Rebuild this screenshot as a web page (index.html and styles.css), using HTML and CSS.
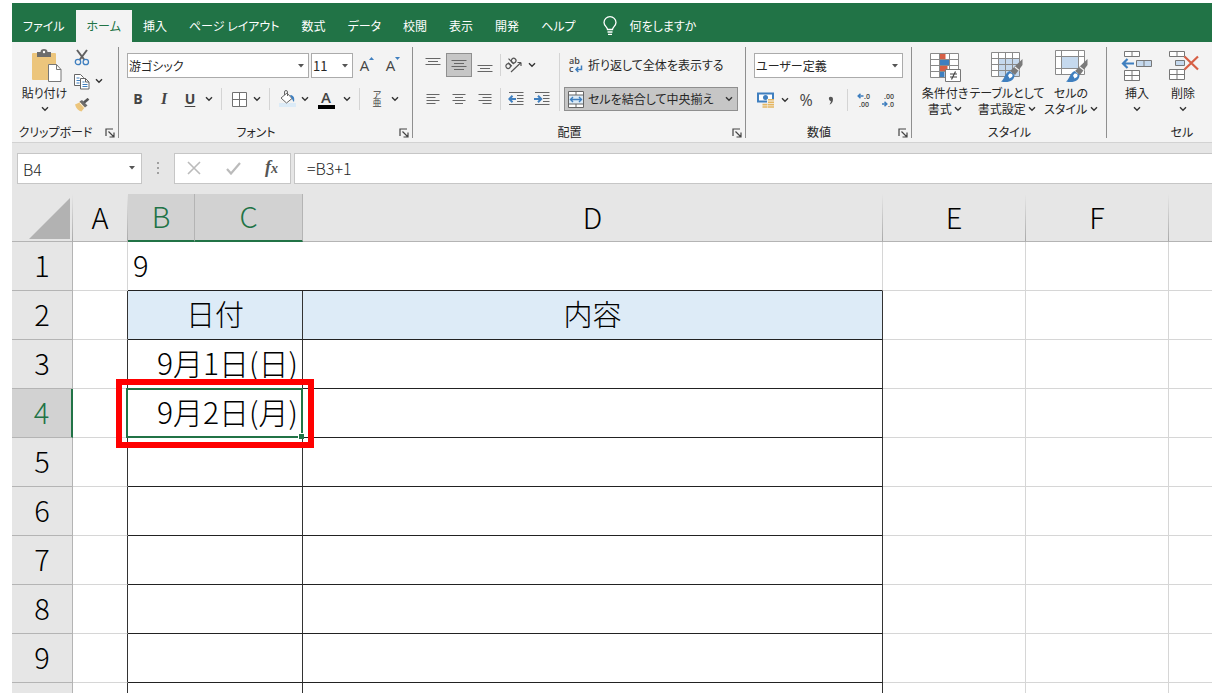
FILE: index.html
```html
<!DOCTYPE html>
<html lang="ja">
<head>
<meta charset="utf-8">
<title>B4 - Excel</title>
<link rel="stylesheet" href="styles.css">
</head>
<body>
<svg class="defs" aria-hidden="true">
  <symbol id="chev" viewBox="0 0 8 6"><path d="M1 1.2l3 3 3-3" fill="none" stroke="#333" stroke-width="1.4"/></symbol>
  <symbol id="tri" viewBox="0 0 6 4"><path d="M0 0h6L3 3.4z" fill="#555"/></symbol>
  <symbol id="launch" viewBox="0 0 10 10"><path d="M1 8V1h7M3.5 3.5l5 5M9 4.500V9H4.500" fill="none" stroke="#444" stroke-width="1.200"/></symbol>
  <symbol id="brush" viewBox="0 0 22 24"><path d="M21.500 0v6l-7.500 10-5-4z" fill="#7a7a7a"/><path d="M13.800 8l4.500 3.500" stroke="#f3f3f3" stroke-width="1.200"/><path d="M8.500 12l5 4c0 5.500-6 8.500-13.500 6.500C4 20 3.500 14 8.500 12z" fill="#3f7fbf"/><path d="M8 15c2-1 4 0 3.500 2-.5 1.600-2 1.500-3 2.500-.5-1-.2-1.500-1.500-2.500z" fill="#fff"/></symbol>
</svg>
<div class="app">
  <nav class="tabs">
    <button class="tab">ファイル</button>
    <button class="tab active">ホーム</button>
    <button class="tab">挿入</button>
    <button class="tab">ページ レイアウト</button>
    <button class="tab">数式</button>
    <button class="tab">データ</button>
    <button class="tab">校閲</button>
    <button class="tab">表示</button>
    <button class="tab">開発</button>
    <button class="tab">ヘルプ</button>
    <button class="tab tell"><svg width="14" height="20" viewBox="0 0 14 20" fill="none" stroke="#fff" stroke-width="1.300"><path d="M4.500 13.500c0-2.500-3.500-3.500-3.500-7a6 5.800 0 0 1 12 0c0 3.500-3.500 4.500-3.500 7zM4.500 16h5M5 18.400h4"/></svg>何をしますか</button>
  </nav>

  <div class="ribbon">
    <section class="group g-clip">
      <div class="body">
        <button class="big paste">
          <svg width="34" height="34" viewBox="0 0 34 34"><rect x="4" y="4" width="24" height="27" rx="1" fill="#ecc57c"/><path d="M9 3h3.500a3.500 3 0 0 1 7 0H23v5H9z" fill="#6d6d6d"/><circle cx="16" cy="3" r="1.200" fill="#fff"/><path d="M20.500 15.500h8l4.500 5v12h-12.500z" fill="#fff" stroke="#777"/><path d="M28.500 15.500v5H33" fill="none" stroke="#777"/></svg>
          <span>貼り付け</span><svg class="chev"><use href="#chev"/></svg>
        </button>
        <div class="stack">
          <button class="ic" aria-label="切り取り"><svg width="16" height="17" viewBox="0 0 16 17" fill="none"><path d="M3 1l7.500 10M13 1L5.500 11" stroke="#606060" stroke-width="2"/><circle cx="4" cy="13" r="2.700" stroke="#3f7fbf" stroke-width="1.300"/><circle cx="11.800" cy="13" r="2.700" stroke="#3f7fbf" stroke-width="1.300"/></svg></button>
          <div class="row"><button class="ic" aria-label="コピー"><svg width="16" height="17" viewBox="0 0 16 17" fill="#fff" stroke="#666"><path d="M.5 1.500h6l3 3v8h-9z"/><path d="M2.500 5h3M2.500 7.500h4M2.500 10h3" stroke="#3f7fbf"/><path d="M6.500 5.500h5l3.500 3.500v7h-8.500z"/><path d="M11.500 5.500V9H15" fill="none"/><path d="M8.500 9h2M8.500 11.500h5M8.500 13.500h5" stroke="#3f7fbf"/></svg></button><button class="dd" aria-label="コピーのオプション"><svg class="chev"><use href="#chev"/></svg></button></div>
          <button class="ic" aria-label="書式のコピー"><svg width="16" height="14" viewBox="0 0 16 14"><path d="M1 6.500L6.500 4l4.500 5-3.500 4.500C4.500 13 2 10.500 1 6.500z" fill="#ecc57c"/><path d="M5.500 3.500L8 2l5.500 5.500-2.500 2z" fill="#6d6d6d"/><path d="M10 4.500L14.500.800" stroke="#555" stroke-width="2.600"/><path d="M6 5l4.500 5" stroke="#fff" stroke-width=".8"/></svg></button>
        </div>
      </div>
      <footer><span>クリップボード</span><button class="launch" aria-label="クリップボードの設定"><svg width="10" height="10"><use href="#launch"/></svg></button></footer>
    </section>

    <section class="group g-font">
      <div class="body col">
        <div class="row inset">
          <span class="combo name"><select aria-label="フォント"><option>游ゴシック</option></select><svg class="tri"><use href="#tri"/></svg></span>
          <span class="combo size"><select aria-label="フォント サイズ"><option>11</option></select><svg class="tri"><use href="#tri"/></svg></span>
          <button class="ic" aria-label="拡大"><span class="letter">A</span><svg class="mark" viewBox="0 0 5 3"><path d="M0 3L2.500 0 5 3z" fill="#3f7fbf"/></svg></button>
          <button class="ic" aria-label="縮小"><span class="letter">A</span><svg class="mark" viewBox="0 0 5 3"><path d="M0 0L2.500 3 5 0z" fill="#3f7fbf"/></svg></button>
        </div>
        <div class="row">
          <button class="ic b">B</button><button class="ic wide i">I</button><button class="ic u">U</button><button class="dd" aria-label="下線"><svg class="chev"><use href="#chev"/></svg></button>
          <i class="sep"></i>
          <button class="ic nar" aria-label="罫線"><svg width="15" height="15" viewBox="0 0 15 15"><path d="M.5.5h14v14H.5zM7.500.5v14M.5 7.500h14" fill="#fff" stroke="#707070"/></svg></button><button class="dd" aria-label="罫線の種類"><svg class="chev"><use href="#chev"/></svg></button>
          <i class="sep"></i>
          <button class="ic nar" aria-label="塗りつぶし"><svg width="17" height="18" viewBox="0 0 17 18"><rect y="13" width="17" height="4" fill="#dcebf7"/><path d="M2 8l6-5 5 5.500-5.500 4.500z" fill="#fff" stroke="#666"/><path d="M5.500 5V2a1.500 1.500 0 0 1 3 0v4" fill="none" stroke="#666"/><path d="M11 5c3 0 5 2 4 7-1.500-1-1.500-3-2.500-4z" fill="#3f7fbf"/></svg></button><button class="dd" aria-label="塗りつぶしの色"><svg class="chev"><use href="#chev"/></svg></button>
          <button class="ic wide color"><span>A</span></button><button class="dd" aria-label="フォントの色"><svg class="chev"><use href="#chev"/></svg></button>
          <i class="sep"></i>
          <button class="ic nar ruby"><span>ア</span><span>亜</span></button><button class="dd" aria-label="ふりがな"><svg class="chev"><use href="#chev"/></svg></button>
        </div>
      </div>
      <footer><span>フォント</span><button class="launch" aria-label="フォントの設定"><svg width="10" height="10"><use href="#launch"/></svg></button></footer>
    </section>

    <section class="group g-align">
      <div class="body">
        <div class="col left">
          <div class="row">
            <button class="ic mid" aria-label="上揃え"><svg width="16" height="16" viewBox="0 0 16 16" stroke="#666"><path d="M.5 1.500h15M3 4.500h10M.5 7.500h15"/></svg></button>
            <button class="ic mid on" aria-label="上下中央揃え"><svg width="16" height="16" viewBox="0 0 16 16" stroke="#666"><path d="M.5 3.500h15M3 6.500h10M.5 9.500h15M3 12.500h10"/></svg></button>
            <button class="ic mid" aria-label="下揃え"><svg width="16" height="16" viewBox="0 0 16 16" stroke="#666"><path d="M.5 8.500h15M3 11.500h10M.5 14.500h15"/></svg></button>
            <i class="sep thin"></i>
            <button class="ic nar" aria-label="方向"><svg width="18" height="18" viewBox="0 0 18 18" fill="none" stroke="#555" stroke-width="1.200"><path d="M6 16L16 6.500M16 6.500h-3.500M16 6.500V10"/><g transform="rotate(-45 6 8)"><circle cx="2.500" cy="7.500" r="2.300"/><path d="M5 5v5.200M8 2.500v7.500"/><circle cx="10.300" cy="7.500" r="2.300"/></g></svg></button><button class="dd" aria-label="方向の種類"><svg class="chev"><use href="#chev"/></svg></button>
          </div>
          <div class="row">
            <button class="ic mid" aria-label="左揃え"><svg width="14" height="12" viewBox="0 0 14 12" stroke="#666"><path d="M.5 1.500h13M.5 4.500h9M.5 7.500h13M.5 10.500h9"/></svg></button>
            <button class="ic mid" aria-label="中央揃え"><svg width="14" height="12" viewBox="0 0 14 12" stroke="#666"><path d="M.5 1.500h13M3 4.500h8M.5 7.500h13M3 10.500h8"/></svg></button>
            <button class="ic mid" aria-label="右揃え"><svg width="14" height="12" viewBox="0 0 14 12" stroke="#666"><path d="M.5 1.500h13M4.500 4.500h9M.5 7.500h13M4.500 10.500h9"/></svg></button>
            <i class="sep thin"></i>
            <button class="ic mid" aria-label="インデントを減らす"><svg width="16" height="14" viewBox="0 0 16 14"><path d="M1 .5h14.500M9 3.500h6.500M9 6.500h6.500M9 9.500h6.500M1 12.500h14.500" stroke="#666"/><path d="M8 7H2M4.500 3.800L1.300 7l3.200 3.200" fill="none" stroke="#3f7fbf" stroke-width="2"/></svg></button>
            <button class="ic mid" aria-label="インデントを増やす"><svg width="16" height="14" viewBox="0 0 16 14"><path d="M1 .5h14.500M9 3.500h6.500M9 6.500h6.500M9 9.500h6.500M1 12.500h14.500" stroke="#666"/><path d="M0 7h6M4 3.800L7.200 7 4 10.200" fill="none" stroke="#3f7fbf" stroke-width="2"/></svg></button>
          </div>
        </div>
        <div class="col right">
          <button class="text"><svg width="16" height="20" viewBox="0 0 16 20"><text x="1" y="9" class="glyph">ab</text><text x="1" y="17" class="glyph">c</text><path d="M13.500 10.500v4H8M10.300 12L8 14.500l2.300 2.500" fill="none" stroke="#3f7fbf" stroke-width="1.500"/></svg>折り返して全体を表示する</button>
          <button class="text on"><svg width="16" height="17" viewBox="0 0 16 17"><path d="M.5.5h15v16H.5zM8 .5v3.500M8 13v3.500" fill="#fff" stroke="#666"/><path d="M.5 4h15v9H.5z" fill="#dcebf7" stroke="#666"/><path d="M3 8.500h10M5 6L2.500 8.500 5 11M11 6l2.500 2.500L11 11" fill="none" stroke="#3f7fbf" stroke-width="1.400"/></svg>セルを結合して中央揃え<svg class="chev end"><use href="#chev"/></svg></button>
        </div>
      </div>
      <footer><span>配置</span><button class="launch" aria-label="配置の設定"><svg width="10" height="10"><use href="#launch"/></svg></button></footer>
    </section>

    <section class="group g-num">
      <div class="body col">
        <span class="combo"><select aria-label="表示形式"><option>ユーザー定義</option></select><svg class="tri"><use href="#tri"/></svg></span>
        <div class="row">
          <button class="ic" aria-label="通貨表示形式"><svg width="18" height="17" viewBox="0 0 18 17"><path d="M1 1.500h15v8H1z" fill="#fff" stroke="#3f7fbf" stroke-width="2"/><circle cx="8.500" cy="5.500" r="2.500" fill="#3f7fbf"/><path d="M10 7h7v9h-7zM5 11h6v5H5z" fill="#f3f3f3"/><path d="M11 7.800h6M11 10.200h6M11 12.600h6M11 15h6M5.500 12.600h5M5.500 15h5" stroke="#e5b661" stroke-width="1.600"/></svg></button><button class="dd" aria-label="通貨の種類"><svg class="chev"><use href="#chev"/></svg></button>
          <button class="ic wide pct">%</button>
          <button class="ic nar" aria-label="桁区切り"><svg width="6" height="9" viewBox="0 0 6 9"><path d="M1 1.500C2 .2 5 .3 5 3.200 5 6 3.500 8 1.500 8.500 2.500 7 3 6 2.800 5 1.500 5 .5 3 1 1.500z" fill="#555"/></svg></button>
          <i class="sep"></i>
          <button class="ic nar" aria-label="小数点以下の表示桁数を増やす"><svg width="16" height="20" viewBox="0 0 16 20"><text x="7" y="9" class="dec">.0</text><text x="2" y="17" class="dec">.00</text><path d="M6.500 6H2M3.500 3.800L1.200 6l2.300 2.200" fill="none" stroke="#3f7fbf" stroke-width="1.500"/></svg></button>
          <button class="ic mid" aria-label="小数点以下の表示桁数を減らす"><svg width="16" height="20" viewBox="0 0 16 20"><text x="3" y="9" class="dec">.00</text><text x="7" y="17" class="dec">.0</text><path d="M1 14h4.500M3.500 11.800L5.800 14l-2.300 2.200" fill="none" stroke="#3f7fbf" stroke-width="1.500"/></svg></button>
        </div>
      </div>
      <footer><span>数値</span><button class="launch" aria-label="数値の設定"><svg width="10" height="10"><use href="#launch"/></svg></button></footer>
    </section>

    <section class="group g-style">
      <div class="body">
        <button class="big">
          <svg width="34" height="34" viewBox="0 0 34 34"><path d="M2.500 4.500h28v24h-28z" fill="#fff"/><path d="M11.500 4h6v6h-6zM11.500 16h8v6h-8z" fill="#d65f45"/><path d="M11.500 10h10v6h-10zM11.500 22h5v6h-5z" fill="#3f7fbf"/><path d="M2.500 4.500h28v24h-28zM2.500 10.500h28M2.500 16.500h28M2.500 22.500h28M11.500 4.500v24M21.500 4.500v24" fill="none" stroke="#8a8a8a"/><path d="M17.500 20.500h15v12h-15z" fill="#fff" stroke="#777"/><path d="M22 25h7M22 28h7M27.500 22.500l-4 8" stroke="#444" stroke-width="1.200"/></svg>
          <span>条件付き<br>書式 <svg class="chev"><use href="#chev"/></svg></span>
        </button>
        <button class="big">
          <svg width="34" height="34" viewBox="0 0 34 34"><path d="M1.500 3.500h28v24h-28z" fill="#fff"/><path d="M8.500 9.500h21v18h-21z" fill="#c5d9ee"/><path d="M1.500 3.500h28v24h-28zM1.500 9.500h28M1.500 15.500h28M1.500 21.500h28M8.500 3.500v24M15.500 3.500v24M22.500 3.500v24" fill="none" stroke="#8a8a8a"/><use href="#brush" x="11" y="10" width="22" height="24"/></svg>
          <span>テーブルとして<br>書式設定 <svg class="chev"><use href="#chev"/></svg></span>
        </button>
        <button class="big">
          <svg width="34" height="34" viewBox="0 0 34 34"><path d="M1.500 1.500h29v24h-29z" fill="#fff"/><path d="M7.500 7.500h17v12h-17z" fill="#c5d9ee"/><path d="M1.500 1.500h29v24h-29zM1.500 7.500h29M1.500 19.500h29M7.500 1.500v24M24.500 1.500v24" fill="none" stroke="#8a8a8a"/><use href="#brush" x="12" y="10" width="22" height="24"/></svg>
          <span>セルの<br>スタイル <svg class="chev"><use href="#chev"/></svg></span>
        </button>
      </div>
      <footer><span>スタイル</span></footer>
    </section>

    <section class="group g-cell">
      <div class="body">
        <button class="big">
          <svg width="34" height="34" viewBox="0 0 34 34"><path d="M4.500 2.500h15v5h-15zM12 2.500v5M4.500 21.500h15v10h-15zM12 21.500v10M4.500 26.500h15" fill="#fff" stroke="#777"/><path d="M16.500 11.500h15v6h-15zM24 11.500v6" fill="#c5d9ee" stroke="#777"/><path d="M14 14.500H3M7.500 10L3 14.500 7.500 19" fill="none" stroke="#3f7fbf" stroke-width="2.200"/></svg>
          <span>挿入</span><svg class="chev"><use href="#chev"/></svg>
        </button>
        <button class="big">
          <svg width="34" height="34" viewBox="0 0 34 34"><path d="M3.500 2.500h15v5h-15zM11 2.500v5M3.500 20.500h15v10h-15zM11 20.500v10M3.500 25.500h15" fill="#fff" stroke="#777"/><path d="M9.500 11.500h9v5h-9z" fill="#c5d9ee" stroke="#777"/><path d="M18.500 7.500l13.500 13M32 7.500l-13.500 13" stroke="#d65f45" stroke-width="2.200"/></svg>
          <span>削除</span><svg class="chev"><use href="#chev"/></svg>
        </button>
      </div>
      <footer><span>セル</span></footer>
    </section>
  </div>

  <div class="fbar">
    <div class="box namebox"><input aria-label="名前ボックス" value="B4"><svg class="tri"><use href="#tri"/></svg></div>
    <svg class="dots" width="4" height="14" viewBox="0 0 4 14" fill="#a0a0a0"><path d="M1 1h2v2H1zM1 6h2v2H1zM1 11h2v2H1z"/></svg>
    <div class="box fx">
      <button aria-label="キャンセル"><svg width="14" height="14" viewBox="0 0 14 14"><path d="M1 1l12 12M13 1L1 13" stroke="#bbb" stroke-width="1.600"/></svg></button>
      <button aria-label="入力"><svg width="15" height="13" viewBox="0 0 15 13"><path d="M1 7l4 4.500L14 1" fill="none" stroke="#bbb" stroke-width="2.200"/></svg></button>
      <button class="fn">f<small>x</small></button>
    </div>
    <input class="box formula" aria-label="数式バー" value="=B3+1">
  </div>

  <table class="sheet">
    <colgroup><col class="c-row"><col class="c-a"><col class="c-b"><col class="c-c"><col class="c-d"><col class="c-e"><col class="c-e"><col></colgroup>
    <thead><tr><th class="corner"><svg width="42" height="42" viewBox="0 0 42 42"><path d="M42 0v41H1z" fill="#b2b2b2"/></svg></th><th>A</th><th class="sel">B</th><th class="sel">C</th><th>D</th><th>E</th><th>F</th><th></th></tr></thead>
    <tbody>
      <tr><th>1</th><td></td><td colspan="3" class="wide-cell">9</td><td></td><td></td><td></td></tr>
      <tr class="head"><th>2</th><td class="edge"></td><td colspan="2" class="k">日付</td><td class="k">内容</td><td></td><td></td><td></td></tr>
      <tr><th>3</th><td class="edge"></td><td colspan="2" class="k">9月1日(日)</td><td class="k"></td><td></td><td></td><td></td></tr>
      <tr><th class="sel">4</th><td class="edge"></td><td colspan="2" class="k current">9月2日(月)<i class="cursor"></i><i class="callout"></i></td><td class="k"></td><td></td><td></td><td></td></tr>
      <tr><th>5</th><td class="edge"></td><td colspan="2" class="k"></td><td class="k"></td><td></td><td></td><td></td></tr>
      <tr><th>6</th><td class="edge"></td><td colspan="2" class="k"></td><td class="k"></td><td></td><td></td><td></td></tr>
      <tr><th>7</th><td class="edge"></td><td colspan="2" class="k"></td><td class="k"></td><td></td><td></td><td></td></tr>
      <tr><th>8</th><td class="edge"></td><td colspan="2" class="k"></td><td class="k"></td><td></td><td></td><td></td></tr>
      <tr><th>9</th><td class="edge"></td><td colspan="2" class="k"></td><td class="k"></td><td></td><td></td><td></td></tr>
      <tr><th></th><td class="edge"></td><td colspan="2" class="k"></td><td class="k"></td><td></td><td></td><td></td></tr>
    </tbody>
  </table>
</div>
</body>
</html>
```
FILE: styles.css
```css
* { box-sizing: border-box; }
body {
  margin: 0;
  padding: 3px 10px 5px 12px;
  height: 100vh;
  background: #fff;
  font: 12px/16px "Noto Sans CJK JP", sans-serif;
  font-feature-settings: "palt";
  color: #262626;
}
.defs { position: absolute; width: 0; height: 0; }
.app { height: 100%; overflow: hidden; background: #fff; }
button, select, input { font: inherit; font-feature-settings: inherit; color: inherit; }
button { border: 0; padding: 0; background: none; }
svg { flex: none; display: block; }
.row { display: flex; align-items: center; height: 24px; }
.col { display: flex; flex-direction: column; }
.chev { width: 8px; height: 6px; }
.tri { width: 6px; height: 4px; }

.tabs { display: flex; height: 39px; padding-top: 7px; background: #217346; }
.tab { padding: 0 11px; color: #fff; white-space: nowrap; }
.tab.active { background: #f3f3f3; color: #217346; }
.tab.tell { display: flex; align-items: center; gap: 13px; padding-left: 16px; }

.ribbon { display: flex; height: 101px; overflow: hidden; background: #f3f3f3; border-bottom: 1px solid #d2d2d2; }
.group { position: relative; flex: none; display: flex; flex-direction: column; justify-content: space-between; padding: 7px 0 0; }
.group::after { content: ""; position: absolute; right: 0; top: 5px; bottom: 4px; width: 1px; background: #8f8f8f; }
.g-clip { width: 107px; }
.g-font { width: 294px; }
.g-align { width: 333px; }
.g-num { width: 166px; }
.g-style { width: 195px; }
.g-cell { width: 150px; }
.body { display: flex; }
.group footer { display: flex; justify-content: center; height: 18px; padding-right: 20px; }
.g-style footer, .g-cell footer { padding-right: 0; }
.launch { position: absolute; right: 4px; bottom: 4px; }

.big { display: flex; flex-direction: column; align-items: center; white-space: nowrap; }
.big .chev { margin-top: 5px; }
.big span .chev { display: inline-block; margin: 0 0 2px; }
.big span { display: block; margin-top: 2px; }
.g-clip .body { padding-left: 5px; }
.paste { width: 55px; }
.stack { display: flex; flex-direction: column; margin-top: -4px; }
.stack .ic { width: 20px; }

.ic { display: flex; align-items: center; justify-content: center; width: 24px; height: 24px; color: #444; }
.ic.nar { width: 22px; }
.ic.mid { width: 26px; }
.ic.wide { width: 28px; }
.ic.on, .text.on { background: #c6c6c6; border: 1px solid #8f8f8f; }
.dd { display: flex; align-items: center; justify-content: center; width: 14px; height: 24px; }
.sep { flex: none; width: 1px; height: 22px; margin: 0 6px 0 5px; background: #d4d4d4; }
.sep.thin { margin: 0 2px; }

.body.col { padding: 4px 0 0 7px; gap: 10px; }
.row.inset { padding-left: 1px; gap: 2px; }
.combo { position: relative; display: block; height: 25px; background: #fff; border: 1px solid #ababab; }
.combo.name { width: 182px; }
.combo.size { width: 42px; font-size: 13px; }
.combo select { appearance: none; width: 100%; height: 100%; padding: 1px 1px 0; border: 0; background: none; }
.combo .tri { position: absolute; right: 4px; top: 10px; pointer-events: none; }
.letter { font: 15px/24px "Open Sans", sans-serif; }
.mark { width: 5px; height: 3px; align-self: flex-start; margin-top: 4px; }
.b, .i, .u, .color { font-family: "Open Sans", sans-serif; font-size: 14px; font-weight: 700; }
.i { font-family: "Liberation Serif", serif; font-style: italic; font-size: 16px; }
.u { text-decoration: underline; text-underline-offset: 2px; }
.color span { width: 17px; border-bottom: 4px solid #000; line-height: 15px; font-size: 15px; font-weight: 600; }
.ruby { flex-direction: column; font-size: 9px; line-height: 8px; }
.pct { font: 16px/24px "Open Sans", sans-serif; }

.g-align .body { padding: 4px 8px 0 7px; }
.g-align .col { gap: 10px; }
.g-align .left { flex: none; width: 140px; border-right: 1px solid #d4d4d4; }
.g-align .right { flex: 1; padding-left: 4px; }
.text { display: flex; align-items: center; gap: 4px; height: 24px; padding: 0 4px 0 3px; border: 1px solid transparent; white-space: nowrap; }
.text .end { margin-left: auto; }
.glyph { font: 600 9px "Open Sans", sans-serif; fill: #444; }
.dec { font: 600 7px "Open Sans", sans-serif; fill: #444; }
.g-num .body { padding-left: 8px; }
.g-num .combo { width: 149px; }
.g-style .body { padding-left: 7px; }
.g-style .big { flex: none; width: 52px; }
.g-style .big:nth-child(2) { width: 72px; }
.g-style .big:nth-child(3) { width: 56px; }
.g-cell .body { padding-left: 7px; }
.g-cell .big { width: 46px; }

.fbar { display: flex; align-items: center; height: 51px; padding: 0 0 1px 5px; background: #e6e6e6; }
.box { height: 31px; background: #fff; border: 1px solid #c6c6c6; font-size: 16px; }
.namebox { display: flex; align-items: center; width: 125px; padding-right: 6px; }
.namebox input { flex: 1; min-width: 0; padding: 2px 5px 0; border: 0; background: none; font-weight: 300; }
.dots { margin: 0 14px; }
.fx { display: flex; align-items: center; justify-content: space-between; width: 117px; margin-right: 3px; padding: 0 12px; }
.fn { font: italic 700 18px/20px "Liberation Serif", serif; color: #555; }
.fn small { font-size: 14px; }
.formula { flex: 1; min-width: 0; padding: 0 12px; border-right: 0; font-weight: 300; font-feature-settings: normal; }

.sheet { table-layout: fixed; width: 100%; border-spacing: 0; font-size: 29px; line-height: 40px; font-weight: 300; font-feature-settings: normal; color: #000; }
.c-row { width: 61px; }
.c-a { width: 55px; }
.c-b { width: 67px; }
.c-c { width: 108px; }
.c-d { width: 580px; }
.c-e { width: 143px; }
.sheet th, .sheet td { height: 49px; padding: 0 0 4px; border: 0 solid #d6d6d6; border-width: 0 1px 1px 0; font-weight: 300; }
.sheet th { background: #e6e6e6; border-color: #b4b4b4; }
.sheet thead th { height: 48px; border-right-color: transparent; background: linear-gradient(#e6e6e6, #a8a8a8) right / 1px 100% no-repeat border-box, #e6e6e6; }
.sheet thead th:last-child { background: #e6e6e6; }
.sheet tr > :last-child { border-right: 0; }
.sheet thead .sel { background: #d2d2d2; color: #217346; border-right-color: #b4b4b4; border-bottom: 2px solid #217346; }
.sheet tbody .sel { background: #d2d2d2; color: #217346; border-right: 2px solid #217346; }
.sheet .corner { padding: 0; }
.corner svg { margin: 3px 2px 0 auto; }
.sheet .edge, .sheet .k { border-right-color: #333; }
.sheet .k { border-bottom-color: #222; text-align: center; }
.sheet .wide-cell { padding-left: 5px; border-bottom-color: #222; }
.head .k { background: #ddebf7; }
.sheet .k[colspan] { padding-right: 4px; text-align: right; font-size: 30px; }
.sheet .head .k[colspan] { padding-right: 0; text-align: center; font-size: 29px; }
.current { position: relative; }
.cursor { position: absolute; inset: -1px -1px -1px -2px; border: 2px solid #217346; }
.cursor::after { content: ""; position: absolute; right: -3px; bottom: -3px; width: 5px; height: 5px; background: #217346; border: 1px solid #fff; border-width: 1px 0 0 1px; }
.callout { position: absolute; inset: -10px -12px -11px -12px; border: 6px solid #f00; }
```
